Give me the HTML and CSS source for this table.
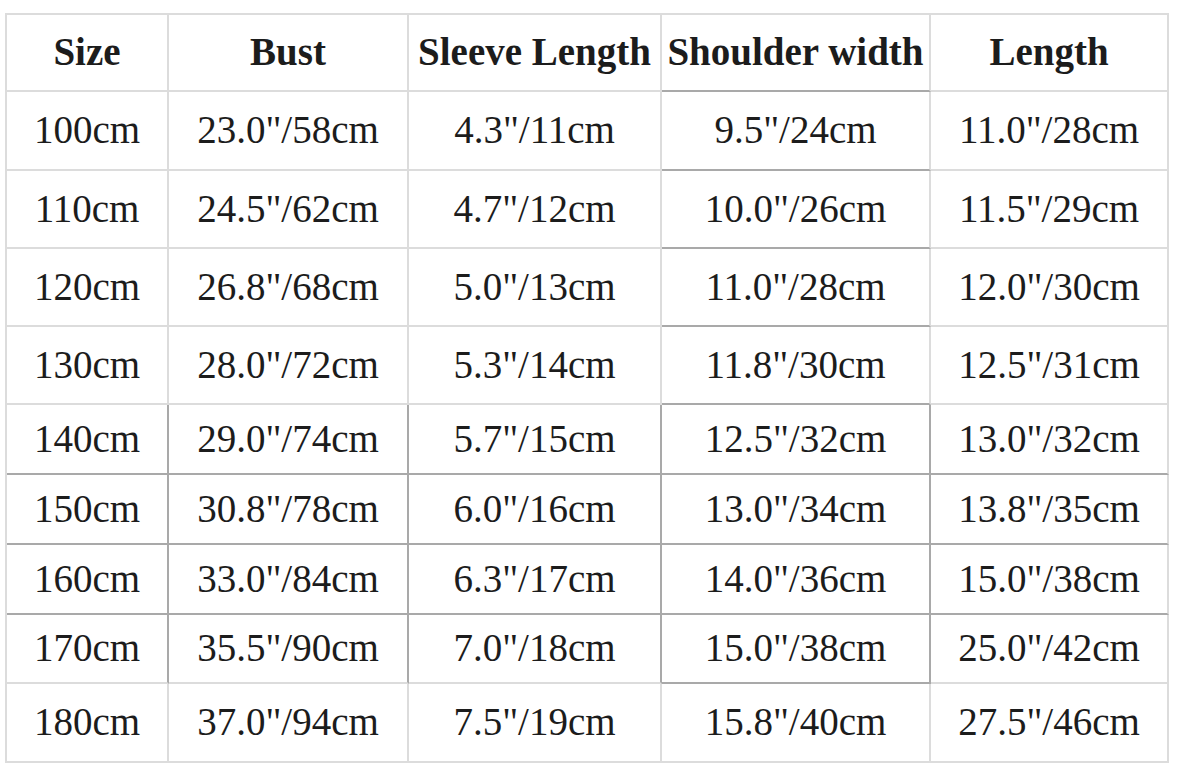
FILE: index.html
```html
<!DOCTYPE html>
<html>
<head>
<meta charset="utf-8">
<link rel="stylesheet" href="styles.css">
</head>
<body>
<table class="size-table">
  <colgroup>
    <col class="c1"><col class="c2"><col class="c3"><col class="c4"><col class="c5">
  </colgroup>
  <tr class="head">
    <th>Size</th><th>Bust</th><th>Sleeve Length</th><th class="sh">Shoulder width</th><th>Length</th>
  </tr>
  <tr class="tall">
    <td>100cm</td><td>23.0"/58cm</td><td>4.3"/11cm</td><td class="sh">9.5"/24cm</td><td>11.0"/28cm</td>
  </tr>
  <tr class="mid">
    <td>110cm</td><td>24.5"/62cm</td><td>4.7"/12cm</td><td class="sh">10.0"/26cm</td><td>11.5"/29cm</td>
  </tr>
  <tr class="mid">
    <td>120cm</td><td>26.8"/68cm</td><td>5.0"/13cm</td><td class="sh">11.0"/28cm</td><td>12.0"/30cm</td>
  </tr>
  <tr class="mid">
    <td>130cm</td><td>28.0"/72cm</td><td>5.3"/14cm</td><td class="sh">11.8"/30cm</td><td>12.5"/31cm</td>
  </tr>
  <tr class="short dark">
    <td>140cm</td><td>29.0"/74cm</td><td>5.7"/15cm</td><td>12.5"/32cm</td><td>13.0"/32cm</td>
  </tr>
  <tr class="short dark">
    <td>150cm</td><td>30.8"/78cm</td><td>6.0"/16cm</td><td>13.0"/34cm</td><td>13.8"/35cm</td>
  </tr>
  <tr class="short dark">
    <td>160cm</td><td>33.0"/84cm</td><td>6.3"/17cm</td><td>14.0"/36cm</td><td>15.0"/38cm</td>
  </tr>
  <tr class="shorter dark-v">
    <td>170cm</td><td>35.5"/90cm</td><td>7.0"/18cm</td><td class="sh">15.0"/38cm</td><td>25.0"/42cm</td>
  </tr>
  <tr class="tall">
    <td>180cm</td><td>37.0"/94cm</td><td>7.5"/19cm</td><td>15.8"/40cm</td><td>27.5"/46cm</td>
  </tr>
</table>
</body>
</html>
```
FILE: styles.css
```css
html, body {
  margin: 0;
  padding: 0;
  background: #ffffff;
}

body {
  padding: 13px 0 0 5px;
}

.size-table {
  box-sizing: border-box;
  width: 1164px;
  table-layout: fixed;
  border-collapse: separate;
  border-spacing: 0;
  border-top: 2px solid #dcdcdc;
  border-left: 2px solid #dcdcdc;
  font-family: "Liberation Serif", "DejaVu Serif", serif;
  font-size: 39px;
  color: #1c1c1c;
}

.c1 { width: 162px; }
.c2 { width: 240px; }
.c3 { width: 253px; }
.c4 { width: 269px; }
.c5 { width: 238px; }

.size-table th,
.size-table td {
  padding: 0;
  text-align: center;
  vertical-align: middle;
  white-space: nowrap;
  border-right: 2px solid #dcdcdc;
  border-bottom: 2px solid #dcdcdc;
  line-height: 1.15;
  font-family: "Liberation Serif", "DejaVu Serif", serif;
}

.size-table th {
  font-weight: bold;
}

.head { height: 77px; }
.tall { height: 79px; }
.mid { height: 78px; }
.short { height: 70px; }
.shorter { height: 69px; }

/* darker grid segments */
.size-table .sh {
  border-bottom-color: #a9a9a9;
}

.dark td {
  border-bottom-color: #a9a9a9;
}

.dark td:not(:last-child),
.dark-v td:not(:last-child) {
  border-right-color: #a9a9a9;
}
```
